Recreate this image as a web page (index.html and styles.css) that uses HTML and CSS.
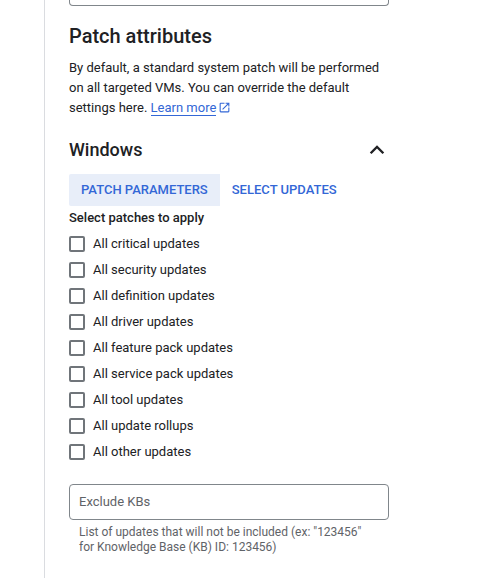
FILE: index.html
```html
<!DOCTYPE html>
<html lang="en">
<head>
<meta charset="utf-8">
<title>Patch attributes</title>
<link rel="stylesheet" href="styles.css">
</head>
<body>
<main class="panel">
  <div class="clipped-field"></div>
  <h2 class="title">Patch attributes</h2>
  <p class="desc">By default, a standard system patch will be performed on all targeted VMs. You can override the default settings here. <a class="link" href="#">Learn more</a><svg class="ext" viewBox="0 0 24 24" width="13" height="13" aria-hidden="true"><path d="M19 19H5V5h7V3H5a2 2 0 0 0-2 2v14a2 2 0 0 0 2 2h14a2 2 0 0 0 2-2v-7h-2v7zM14 3v2h3.59l-9.83 9.83 1.41 1.41L19 6.41V10h2V3h-7z"/></svg></p>
  <div class="section-head">
    <h3 class="section-title">Windows</h3>
    <svg class="chevron" viewBox="0 0 24 24" width="24" height="24" aria-hidden="true"><path d="M12 7.2L4.8 14.4l1.7 1.7 5.5-5.5 5.5 5.5 1.7-1.7z"/></svg>
  </div>
  <div class="tabs">
    <div class="tab active">Patch parameters</div>
    <div class="tab">Select updates</div>
  </div>
  <div class="group-label">Select patches to apply</div>
  <ul class="checks">
    <li class="check"><span class="box"></span>All critical updates</li>
    <li class="check"><span class="box"></span>All security updates</li>
    <li class="check"><span class="box"></span>All definition updates</li>
    <li class="check"><span class="box"></span>All driver updates</li>
    <li class="check"><span class="box"></span>All feature pack updates</li>
    <li class="check"><span class="box"></span>All service pack updates</li>
    <li class="check"><span class="box"></span>All tool updates</li>
    <li class="check"><span class="box"></span>All update rollups</li>
    <li class="check"><span class="box"></span>All other updates</li>
  </ul>
  <div class="field">Exclude KBs</div>
  <p class="hint">List of updates that will not be included (ex: "123456" for Knowledge Base (KB) ID: 123456)</p>
</main>
</body>
</html>
```
FILE: styles.css
```css
html, body {
  margin: 0;
  padding: 0;
  background: #fff;
  height: 100%;
  overflow: hidden;
}
body {
  font-family: Roboto, "Liberation Sans", sans-serif;
  color: #202124;
}
.panel {
  margin-left: 44px;
  width: 320px;
  height: 578px;
  box-sizing: content-box;
  border-left: 1px solid #dadce0;
  padding-left: 24px;
}
.clipped-field {
  height: 5px;
  border: 1px solid #80868b;
  border-top: 0;
  border-radius: 0 0 4px 4px;
}
.title {
  margin: 16px 0 0;
  font-size: 20px;
  line-height: 28px;
  font-weight: 500;
}
.desc {
  margin: 8px 0 0;
  font-size: 13px;
  line-height: 20px;
}
.link {
  color: #3367d6;
  text-decoration: none;
  border-bottom: 1px solid #3367d6;
}
.ext {
  fill: #3367d6;
  margin-left: 2px;
  vertical-align: -2px;
}
.section-head {
  margin-top: 18px;
  height: 28px;
  display: flex;
  align-items: center;
  justify-content: space-between;
}
.section-title {
  margin: 0;
  font-size: 18px;
  font-weight: 500;
  line-height: 28px;
}
.chevron {
  fill: #202124;
}
.tabs {
  display: flex;
  margin-top: 10px;
}
.tab {
  height: 32px;
  line-height: 32px;
  padding: 0 12px;
  font-size: 13px;
  font-weight: 500;
  text-transform: uppercase;
  color: #3367d6;
}
.active {
  background: #e8eef9;
  border-radius: 2px 0 0 2px;
}
.group-label {
  margin-top: 3px;
  font-size: 13px;
  font-weight: 500;
  line-height: 18px;
}
.checks {
  list-style: none;
  margin: 3px 0 0;
  padding: 0;
}
.check {
  display: flex;
  align-items: center;
  height: 26px;
  font-size: 13px;
}
.box {
  box-sizing: border-box;
  width: 16px;
  height: 16px;
  margin-top: 2px;
  border: 2px solid #70757a;
  border-radius: 2px;
  margin-right: 8px;
}
.field {
  box-sizing: border-box;
  height: 36px;
  margin-top: 20px;
  padding: 0 9px;
  border: 1px solid #80868b;
  border-radius: 4px;
  font-size: 13px;
  line-height: 34px;
  color: #5f6368;
}
.hint {
  margin: 5px 0 0;
  padding: 0 10px;
  font-size: 12px;
  line-height: 15px;
  color: #5f6368;
}
```
